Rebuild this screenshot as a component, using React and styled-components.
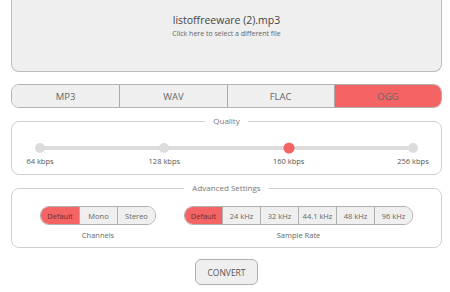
import React, { useState } from 'react';
import styled, { createGlobalStyle } from 'styled-components';

const Global = createGlobalStyle`
  html, body { margin: 0; padding: 0; background: #fff; }
  body { font-family: "Open Sans", "Liberation Sans", sans-serif; color: #555; }
`;

const RED = '#f46464';

const Page = styled.div`
  width: 431px;
  margin: 0 auto 0 11px;
  display: flex;
  flex-direction: column;
`;

const FileBox = styled.div`
  height: 72px;
  box-sizing: border-box;
  background: #efefef;
  border: 1px solid #bdbdbd;
  border-top: none;
  border-radius: 0 0 8px 8px;
  display: flex;
  flex-direction: column;
  align-items: center;
  padding-top: 12px;
  cursor: pointer;
`;

const FileName = styled.div`
  font-size: 10.5px;
  color: #444;
  line-height: 16px;
`;

const FileHint = styled.div`
  font-size: 7px;
  color: #666;
  line-height: 12px;
`;

const Formats = styled.div`
  margin-top: 12px;
  display: grid;
  grid-template-columns: repeat(4, 1fr);
  height: 24px;
  border: 1px solid #b3b3b3;
  border-radius: 8px;
  overflow: hidden;
  box-sizing: border-box;
`;

const FormatBtn = styled.div`
  display: flex;
  align-items: center;
  justify-content: center;
  font-size: 9.5px;
  color: #666;
  background: ${p => (p.$active ? RED : '#efefef')};
  border-left: ${p => (p.$first ? 'none' : '1px solid #a9a9a9')};
  cursor: pointer;
`;

const Group = styled.fieldset`
  margin: 8px 0 0;
  padding: 0;
  border: 1px solid #cfcfcf;
  border-radius: 8px;
  min-width: 0;
`;

const Legend = styled.legend`
  margin: 0 auto;
  padding: 0 8px;
  font-size: 8px;
  color: #777;
  line-height: 10px;
`;

const SliderArea = styled.div`
  padding: 20px 28px 8px;
`;

const Track = styled.div`
  position: relative;
  height: 4px;
  background: #dcdcdc;
  border-radius: 2px;
`;

const Dot = styled.div`
  position: absolute;
  top: 50%;
  width: ${p => (p.$active ? 11 : 10)}px;
  height: ${p => (p.$active ? 11 : 10)}px;
  border-radius: 50%;
  background: ${p => (p.$active ? RED : '#dcdcdc')};
  transform: translate(-50%, -50%);
  cursor: pointer;
`;

const Labels = styled.div`
  display: flex;
  justify-content: space-between;
  margin-top: 6px;
`;

const Label = styled.div`
  width: 0;
  display: flex;
  justify-content: center;
  white-space: nowrap;
  font-size: 7.5px;
  color: #555;
  line-height: 10px;
`;

const Settings = styled.div`
  display: flex;
  justify-content: space-between;
  padding: 13px 28px 7px 28px;
`;

const Setting = styled.div`
  display: flex;
  flex-direction: column;
  align-items: center;
`;

const Pills = styled.div`
  display: flex;
  height: 19px;
  border: 1px solid #b0b0b0;
  border-radius: 9px;
  overflow: hidden;
  box-sizing: border-box;
`;

const Pill = styled.div`
  width: ${p => p.$w}px;
  box-sizing: border-box;
  display: flex;
  align-items: center;
  justify-content: center;
  font-size: 7.5px;
  color: ${p => (p.$active ? '#6a2e2e' : '#666')};
  background: ${p => (p.$active ? RED : '#efefef')};
  border-left: ${p => (p.$first ? 'none' : '1px solid #b0b0b0')};
  cursor: pointer;
`;

const Caption = styled.div`
  margin-top: 5px;
  font-size: 7.5px;
  color: #666;
  line-height: 10px;
`;

const Footer = styled.div`
  display: flex;
  justify-content: center;
  margin-top: 11px;
`;

const Convert = styled.button`
  width: 63px;
  height: 26px;
  border: 1px solid #b0b0b0;
  border-radius: 6px;
  background: #efefef;
  font-family: inherit;
  font-size: 8.5px;
  color: #555;
  padding: 0;
  cursor: pointer;
`;

const formats = ['MP3', 'WAV', 'FLAC', 'OGG'];
const qualities = ['64 kbps', '128 kbps', '160 kbps', '256 kbps'];
const channels = ['Default', 'Mono', 'Stereo'];
const rates = ['Default', '24 kHz', '32 kHz', '44.1 kHz', '48 kHz', '96 kHz'];

export default function App() {
  const [format, setFormat] = useState('OGG');
  const [quality, setQuality] = useState(2);
  const [channel, setChannel] = useState('Default');
  const [rate, setRate] = useState('Default');

  return (
    <Page>
      <Global />
      <FileBox>
        <FileName>listoffreeware (2).mp3</FileName>
        <FileHint>Click here to select a different file</FileHint>
      </FileBox>

      <Formats>
        {formats.map((f, i) => (
          <FormatBtn key={f} $first={i === 0} $active={f === format} onClick={() => setFormat(f)}>
            {f}
          </FormatBtn>
        ))}
      </Formats>

      <Group>
        <Legend>Quality</Legend>
        <SliderArea>
          <Track>
            {qualities.map((q, i) => (
              <Dot
                key={q}
                $active={i === quality}
                style={{ left: `${(i / (qualities.length - 1)) * 100}%` }}
                onClick={() => setQuality(i)}
              />
            ))}
          </Track>
          <Labels>
            {qualities.map(q => (
              <Label key={q}>{q}</Label>
            ))}
          </Labels>
        </SliderArea>
      </Group>

      <Group>
        <Legend>Advanced Settings</Legend>
        <Settings>
          <Setting>
            <Pills>
              {channels.map(c => (
                <Pill key={c} $w={38} $first={c === channels[0]} $active={c === channel} onClick={() => setChannel(c)}>
                  {c}
                </Pill>
              ))}
            </Pills>
            <Caption>Channels</Caption>
          </Setting>
          <Setting>
            <Pills>
              {rates.map((r, i) => (
                <Pill key={r} $w={i === 0 ? 37 : 38} $first={i === 0} $active={r === rate} onClick={() => setRate(r)}>
                  {r}
                </Pill>
              ))}
            </Pills>
            <Caption>Sample Rate</Caption>
          </Setting>
        </Settings>
      </Group>

      <Footer>
        <Convert>CONVERT</Convert>
      </Footer>
    </Page>
  );
}
